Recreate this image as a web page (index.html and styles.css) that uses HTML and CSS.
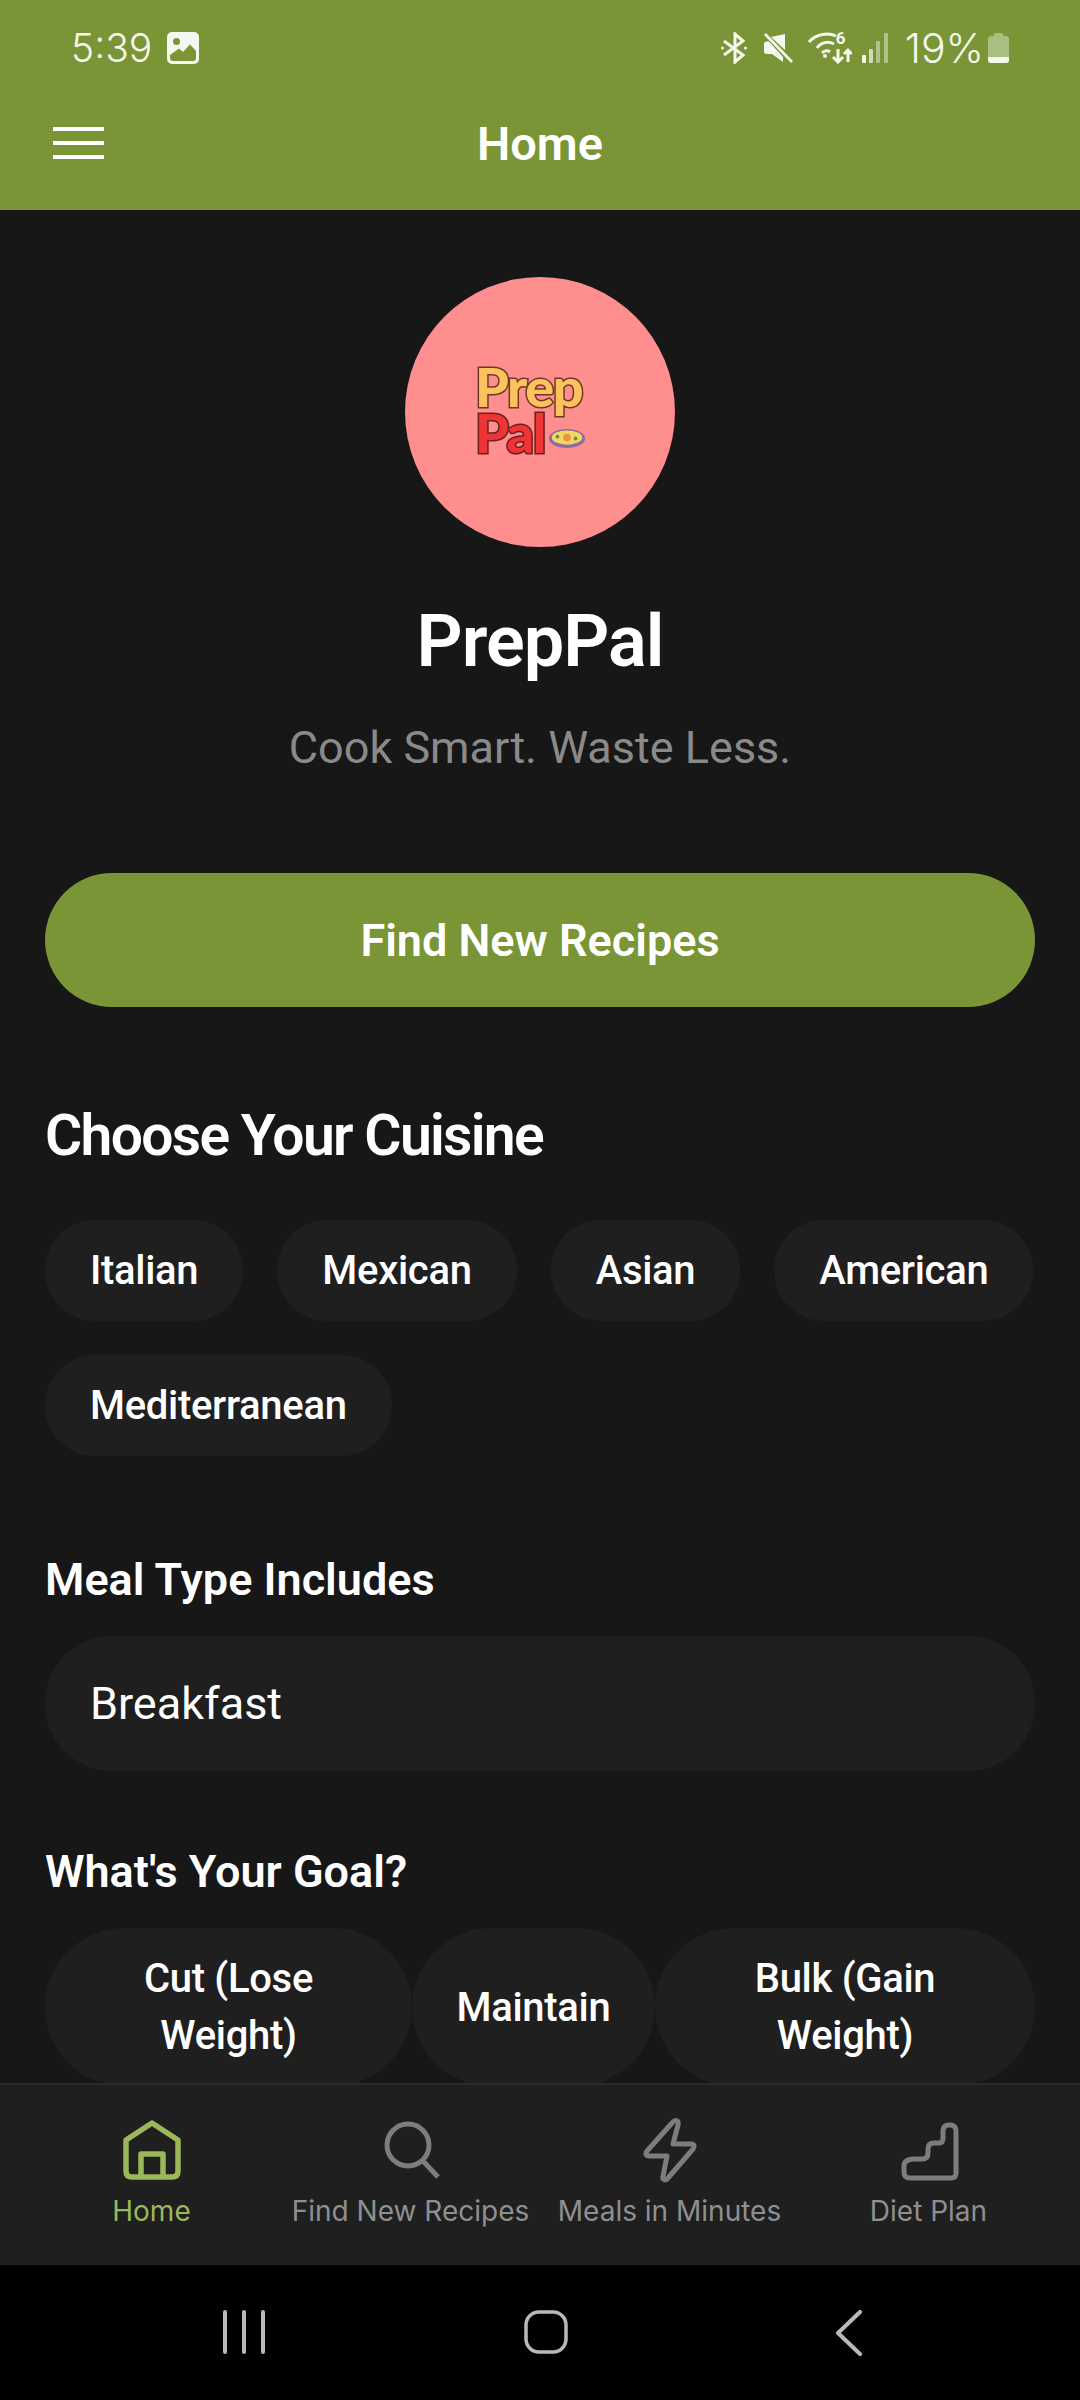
FILE: index.html
```html
<!DOCTYPE html>
<html lang="en">
<head>
    <meta charset="UTF-8">
    <meta name="viewport" content="width=device-width, initial-scale=1.0">
    <title>PrepPal</title>
    <link rel="stylesheet" href="styles.css">
</head>
<body>
<div class="app">
    <div class="top">
        <div class="status">
            <div class="status-left">
                <span class="time">5:39</span>
                <svg class="ic-gallery" viewBox="0 0 32 32">
                    <path fill="#f4f8ee" fill-rule="evenodd" d="M5 0h22a5 5 0 0 1 5 5v22a5 5 0 0 1-5 5H5a5 5 0 0 1-5-5V5a5 5 0 0 1 5-5zM9.500 6a3.500 3.500 0 1 0 0 7 3.500 3.500 0 0 0 0-7zM3 23v3a3 3 0 0 0 3 3h20a3 3 0 0 0 3-3v-7l-6-6.500-7 7.500-4-3.500z"/>
                    <path fill="#799536" d="M5 26h22v-1H5z"/>
                </svg>
            </div>
            <div class="status-right">
                <svg class="ic-bt" viewBox="0 0 26 32" fill="none" stroke="#f4f8ee" stroke-width="3">
                    <path d="M3 9l19 14-8 7V2l8 7L3 23"/>
                    <circle cx="1.500" cy="16" r="1.500" fill="#f4f8ee" stroke="none"/>
                    <circle cx="24.500" cy="16" r="1.500" fill="#f4f8ee" stroke="none"/>
                </svg>
                <svg class="ic-mute" viewBox="0 0 30 30">
                    <path fill="#f4f8ee" d="M22 1v16L8 4zM1 11c0-1.500 1-2.500 2.500-2.500H6L20 24v5l-11-8H3.500C2 21 1 20 1 18.500z"/>
                    <path stroke="#f4f8ee" stroke-width="2.600" d="M2 1l27 28"/>
                </svg>
                <div class="wifi">
                    <svg class="ic-wifi" viewBox="0 0 44 32" fill="none" stroke="#f4f8ee" stroke-width="3">
                        <path d="M1 10C8 2 20 0 28 4"/>
                        <path d="M9 16C13 10 20 9 26 12"/>
                        <path d="M14 21c2-2 5-3 8-1"/>
                        <circle cx="17" cy="24" r="2" fill="#f4f8ee" stroke="none"/>
                        <path d="M30 17v13m-5-5 5 5 5-5M40 30V19m-4 3 4-4 4 4"/>
                    </svg>
                    <span class="wifi-six">6</span>
                </div>
                <svg class="ic-signal" viewBox="0 0 27 30" fill="#f4f8ee">
                    <rect x="0" y="22" width="4" height="8" rx="1"/>
                    <rect x="7" y="16" width="4" height="14" rx="1" opacity=".7"/>
                    <rect x="14" y="8" width="4" height="22" rx="1" opacity=".45"/>
                    <rect x="22" y="0" width="4" height="30" rx="1" opacity=".45"/>
                </svg>
                <span class="battery-text">19%</span>
                <div class="battery"><div class="battery-level"></div></div>
            </div>
        </div>
        <div class="header">
            <div class="menu">
                <span></span>
                <span></span>
                <span></span>
            </div>
            <div class="header-title">Home</div>
            <div></div>
        </div>
    </div>

    <div class="content">
        <div class="avatar">
            <div class="logo">
                <div class="logo-prep">Prep</div>
                <div class="logo-pal">Pal<svg class="logo-dish" viewBox="0 0 40 22">
                    <ellipse cx="20" cy="11" rx="19" ry="10" fill="#8f6aa0"/>
                    <ellipse cx="20" cy="10" rx="16" ry="7.500" fill="#f3d565"/>
                    <circle cx="20" cy="10" r="4" fill="#e8963a"/>
                    <circle cx="10" cy="9" r="2" fill="#6d8a55"/>
                    <circle cx="29" cy="11" r="2" fill="#6d8a55"/>
                </svg></div>
            </div>
        </div>
        <h1 class="app-name">PrepPal</h1>
        <p class="tagline">Cook Smart. Waste Less.</p>

        <button class="find-btn">Find New Recipes</button>

        <h2 class="section-title">Choose Your Cuisine</h2>
        <div class="chips">
            <div class="chip">Italian</div>
            <div class="chip">Mexican</div>
            <div class="chip">Asian</div>
            <div class="chip">American</div>
            <div class="chip">Mediterranean</div>
        </div>

        <div class="label label-meal">Meal Type Includes</div>
        <div class="select">Breakfast</div>

        <div class="label label-goal">What's Your Goal?</div>
        <div class="goals">
            <div class="goal">Cut (Lose Weight)</div>
            <div class="goal">Maintain</div>
            <div class="goal">Bulk (Gain Weight)</div>
        </div>
    </div>

    <div class="tabbar">
        <div class="tab tab-active">
            <svg class="tab-icon" viewBox="0 0 66 66" fill="none" stroke="#9ab85a" stroke-width="5.500" stroke-linejoin="round">
                <path d="M33 6 7 23v31c0 4 2 6 6 6h40c4 0 6-2 6-6V23z"/>
                <path d="M22 60V37h22v23"/>
            </svg>
            <span>Home</span>
        </div>
        <div class="tab">
            <svg class="tab-icon" viewBox="0 0 66 66" fill="none" stroke="#7d7d7d" stroke-width="5">
                <circle cx="30" cy="28" r="21"/>
                <path d="M45 44l15 16"/>
            </svg>
            <span>Find New Recipes</span>
        </div>
        <div class="tab">
            <svg class="tab-icon" viewBox="0 0 66 66" fill="none" stroke="#7d7d7d" stroke-width="5" stroke-linejoin="round">
                <path d="M35 6 10 34c-2 3-1 5 2 5h18l-4 20c-1 4 3 5 5 2l25-29c2-3 1-5-2-5H36l5-19c1-5-3-6-6-2z"/>
            </svg>
            <span>Meals in Minutes</span>
        </div>
        <div class="tab">
            <svg class="tab-icon" viewBox="0 0 66 66" fill="none" stroke="#7d7d7d" stroke-width="5" stroke-linejoin="round">
                <path d="M19 42h7c4 0 6-2 6-6v-4c0-4 2-6 6-6h5c3 0 4-2 4-5V14c0-4 2-6 6-6h1c4 0 6 2 6 6v42c0 4-2 5-5 5H14c-4 0-6-2-6-6v-6c0-5 4-7 11-7z"/>
            </svg>
            <span>Diet Plan</span>
        </div>
    </div>

    <div class="navbar">
        <svg class="nav-recents" viewBox="0 0 44 44" fill="none" stroke="#b9b9b9" stroke-width="4" stroke-linecap="round">
            <path d="M3 2v40M22 2v40M41 2v40"/>
        </svg>
        <svg class="nav-home" viewBox="0 0 44 44" fill="none" stroke="#b9b9b9" stroke-width="3.500">
            <rect x="2" y="2" width="40" height="40" rx="13"/>
        </svg>
        <svg class="nav-back" viewBox="0 0 26 46" fill="none" stroke="#b9b9b9" stroke-width="4" stroke-linecap="round" stroke-linejoin="round">
            <path d="M24 2 2 23l22 21"/>
        </svg>
    </div>
</div>
</body>
</html>
```

FILE: styles.css
```css
* {
    box-sizing: border-box;
}
body {
    margin: 0;
    background-color: #171717;
    font-family: Roboto, "Liberation Sans", sans-serif;
    color: #fff;
}
.app {
    width: 1080px;
    height: 2400px;
    display: flex;
    flex-direction: column;
    overflow: hidden;
}

/* status bar + header */
.top {
    height: 210px;
    background-color: #799536;
    flex-shrink: 0;
}
.status {
    height: 95px;
    padding: 0 71px 0 71px;
    display: flex;
    align-items: center;
    justify-content: space-between;
    color: #f4f8ee;
}
.status-left, .status-right {
    display: flex;
    align-items: center;
}
.time {
    font-family: Inter, sans-serif;
    font-size: 39px;
    font-weight: 300;
}
.ic-gallery {
    width: 32px;
    height: 32px;
    margin-left: 15px;
}
.ic-bt {
    width: 26px;
    height: 32px;
}
.ic-mute {
    width: 30px;
    height: 30px;
    margin-left: 16px;
}
.wifi {
    position: relative;
    width: 44px;
    height: 32px;
    margin-left: 15px;
}
.ic-wifi {
    width: 44px;
    height: 32px;
    display: block;
}
.wifi-six {
    position: absolute;
    top: -4px;
    left: 28px;
    font-size: 17px;
    font-weight: 700;
}
.ic-signal {
    width: 27px;
    height: 30px;
    margin-left: 10px;
}
.battery-text {
    font-family: Inter, sans-serif;
    font-size: 41px;
    font-weight: 300;
    margin-left: 16px;
}
.battery {
    position: relative;
    width: 21px;
    height: 27px;
    margin-left: 4px;
    margin-top: 3px;
    background-color: #a9bf7f;
    border-radius: 3px;
}
.battery::before {
    content: "";
    position: absolute;
    top: -3px;
    left: 6px;
    width: 9px;
    height: 3px;
    background-color: #a9bf7f;
    border-radius: 2px 2px 0 0;
}
.battery-level {
    position: absolute;
    left: 0;
    right: 0;
    bottom: 0;
    height: 6px;
    background-color: #f4f8ee;
    border-radius: 0 0 3px 3px;
}
.header {
    height: 115px;
    padding: 0 53px 19px;
    display: grid;
    grid-template-columns: 1fr auto 1fr;
    align-items: center;
}
.menu {
    width: 51px;
    display: flex;
    flex-direction: column;
    gap: 10px;
}
.menu span {
    display: block;
    height: 4px;
    background-color: #fff;
}
.header-title {
    font-size: 47px;
    font-weight: 600;
}

/* main scroll area */
.content {
    flex: 1;
    min-height: 0;
    overflow: hidden;
    padding: 67px 45px 0;
    display: flex;
    flex-direction: column;
}
.avatar {
    width: 270px;
    height: 270px;
    border-radius: 50%;
    background-color: #ff8f8f;
    align-self: center;
    flex-shrink: 0;
    display: flex;
    padding: 87px 0 0 70px;
}
.logo {
    font-family: Lato, sans-serif;
    font-weight: 900;
    font-size: 54px;
    line-height: 46px;
    letter-spacing: -1.5px;
    filter: blur(0.5px);
}
.logo-prep {
    color: #fdc25e;
    -webkit-text-stroke: 3px #6b3a20;
    paint-order: stroke fill;
}
.logo-pal {
    color: #ee3434;
    -webkit-text-stroke: 3px #6b2020;
    paint-order: stroke fill;
    display: flex;
    align-items: flex-end;
}
.logo-dish {
    width: 38px;
    height: 21px;
    margin: 0 0 7px 3px;
}
.app-name {
    margin: 55px 0 0;
    font-size: 72px;
    font-weight: 600;
    line-height: 80px;
    letter-spacing: -1px;
    text-align: center;
}
.tagline {
    margin: 41px 0 0;
    font-size: 45px;
    line-height: 50px;
    text-align: center;
    color: #8a8a8a;
}
.find-btn {
    margin-top: 100px;
    height: 134px;
    flex-shrink: 0;
    border: none;
    border-radius: 67px;
    background-color: #799536;
    color: #fff;
    font-family: inherit;
    font-size: 45px;
    font-weight: 600;
}
.section-title {
    margin: 94px 0 0;
    font-size: 57px;
    font-weight: 600;
    line-height: 70px;
    letter-spacing: -1.7px;
}
.chips {
    margin-top: 49px;
    display: flex;
    flex-wrap: wrap;
    gap: 34px;
}
.chip {
    height: 101px;
    padding: 0 45px;
    border-radius: 50px;
    background-color: #1f1f1f;
    font-size: 40px;
    font-weight: 500;
    letter-spacing: -0.3px;
    line-height: 101px;
}
.label {
    font-size: 45px;
    font-weight: 600;
    line-height: 50px;
}
.label-meal {
    margin-top: 99px;
}
.label-goal {
    margin-top: 76px;
}
.select {
    margin-top: 31px;
    height: 135px;
    flex-shrink: 0;
    padding: 0 45px;
    border-radius: 67px;
    background-color: #1f1f1f;
    font-size: 45px;
    line-height: 135px;
}
.goals {
    margin-top: 31px;
    display: grid;
    grid-template-columns: 367px 243px 380px;
}
.goal {
    height: 158px;
    padding: 22px 45px;
    border-radius: 79px;
    background-color: #1f1f1f;
    font-size: 40px;
    font-weight: 500;
    letter-spacing: -0.3px;
    line-height: 57px;
    text-align: center;
    display: flex;
    align-items: center;
    justify-content: center;
}

/* bottom tabs */
.tabbar {
    height: 182px;
    flex-shrink: 0;
    padding: 0 22px;
    display: grid;
    grid-template-columns: repeat(4, 1fr);
    background-color: #1f1f1f;
    border-top: 2px solid #2a2a2a;
}
.tab {
    padding-top: 32px;
    display: flex;
    flex-direction: column;
    align-items: center;
    font-family: Inter, sans-serif;
    font-size: 28px;
    color: #8f8f8f;
    white-space: nowrap;
}
.tab span {
    margin-top: 11px;
}
.tab-active {
    color: #9ab85a;
}
.tab-icon {
    width: 66px;
    height: 66px;
}

/* android nav */
.navbar {
    height: 135px;
    flex-shrink: 0;
    background-color: #000;
    position: relative;
}
.navbar svg {
    position: absolute;
    top: 45px;
}
.nav-recents {
    left: 222px;
    width: 44px;
    height: 44px;
}
.nav-home {
    left: 524px;
    width: 44px;
    height: 44px;
}
.nav-back {
    left: 836px;
    width: 26px;
    height: 46px;
}
```
